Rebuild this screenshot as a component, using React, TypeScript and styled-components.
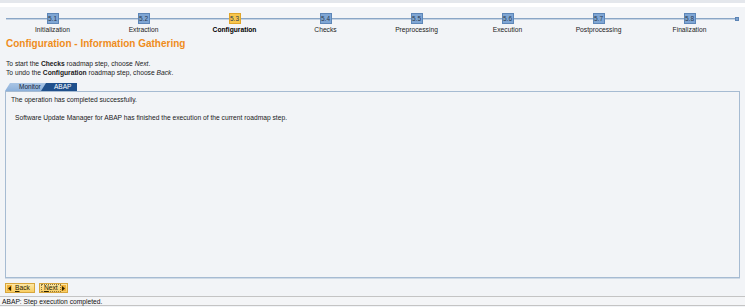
import React from "react";
import styled, { createGlobalStyle, css } from "styled-components";

const GlobalStyle = createGlobalStyle`
  html, body {
    margin: 0;
    padding: 0;
    background: #f2f4f7;
    font-family: "Liberation Sans", Arial, sans-serif;
    color: #1a1a1a;
  }
  #root {
    height: 307px;
  }
`;

interface Step {
  num: string;
  label: string;
  active?: boolean;
}

const steps: Step[] = [
  { num: "5.1", label: "Initialization" },
  { num: "5.2", label: "Extraction" },
  { num: "5.3", label: "Configuration", active: true },
  { num: "5.4", label: "Checks" },
  { num: "5.5", label: "Preprocessing" },
  { num: "5.6", label: "Execution" },
  { num: "5.7", label: "Postprocessing" },
  { num: "5.8", label: "Finalization" },
];

const App: React.FC = () => {
  return (
    <>
      <GlobalStyle />
      <Page>
        <TopBand />
        <Roadmap>
          {steps.map((s) => (
            <StepItem key={s.num}>
              <StepBox $active={s.active}>{s.num}</StepBox>
              <StepLabel $active={s.active}>{s.label}</StepLabel>
            </StepItem>
          ))}
        </Roadmap>

        <Title>Configuration - Information Gathering</Title>

        <Instructions>
          <div>
            To start the <b>Checks</b> roadmap step, choose <i>Next</i>.
          </div>
          <div>
            To undo the <b>Configuration</b> roadmap step, choose <i>Back</i>.
          </div>
        </Instructions>

        <TabStrip>
          <Tab>Monitor</Tab>
          <Tab $selected>ABAP</Tab>
        </TabStrip>
        <Panel>
          <PanelLine>The operation has completed successfully.</PanelLine>
          <PanelLine $indent>
            Software Update Manager for ABAP has finished the execution of the current roadmap step.
          </PanelLine>
        </Panel>

        <ButtonRow>
          <NavButton>
            <ArrowBox>
              <svg width="3" height="5" viewBox="0 0 3 5">
                <path d="M3 0 L0 2.5 L3 5 Z" fill="#2e2400" />
              </svg>
            </ArrowBox>
            <ButtonText>
              <u>B</u>ack
            </ButtonText>
          </NavButton>
          <NavButton>
            <ButtonText $focused>
              <u>N</u>ext
            </ButtonText>
            <ArrowBox>
              <svg width="3" height="5" viewBox="0 0 3 5">
                <path d="M0 0 L3 2.5 L0 5 Z" fill="#2e2400" />
              </svg>
            </ArrowBox>
          </NavButton>
        </ButtonRow>

        <StatusBar>ABAP: Step execution completed.</StatusBar>
      </Page>
    </>
  );
};

export default App;

const smallText = css`
  font-size: 6.7px;
  line-height: 8px;
`;

const Page = styled.div`
  display: flex;
  flex-direction: column;
  height: 307px;
  overflow: hidden;
`;

const TopBand = styled.div`
  height: 3px;
  background: #e4e7ec;
  border-bottom: 4px solid #ffffff;
`;

const Roadmap = styled.div`
  position: relative;
  display: grid;
  grid-template-columns: repeat(8, 91px);
  padding: 6px 0 0 7px;
  height: 24px;

  &::before {
    content: "";
    position: absolute;
    left: 6px;
    width: 731px;
    top: 11px;
    height: 1px;
    background: #8aa6c6;
    border-bottom: 1px solid #c5d3e3;
  }
  &::after {
    content: "";
    position: absolute;
    left: 735px;
    top: 10px;
    width: 4px;
    height: 4px;
    background: #7fa3cf;
    border: 1px solid #5c84b5;
    box-sizing: border-box;
  }
`;

const StepItem = styled.div`
  position: relative;
  display: flex;
  flex-direction: column;
  align-items: center;
  z-index: 1;
`;

const StepBox = styled.div<{ $active?: boolean }>`
  width: 12px;
  height: 11px;
  box-sizing: border-box;
  display: flex;
  align-items: center;
  justify-content: center;
  font-size: 6.5px;
  color: #2b3a4e;
  background: ${(p) => (p.$active ? "#f7c64e" : "#7fa6d4")};
  border: 1px solid ${(p) => (p.$active ? "#e0a52a" : "#5d86b8")};
`;

const StepLabel = styled.div<{ $active?: boolean }>`
  ${smallText};
  margin-top: 2px;
  white-space: nowrap;
  font-weight: ${(p) => (p.$active ? 700 : 400)};
  color: ${(p) => (p.$active ? "#000" : "#222")};
`;

const Title = styled.div`
  margin: 1px 0 0 6px;
  font-size: 10px;
  line-height: 12px;
  font-weight: 700;
  color: #ef8d1c;
`;

const Instructions = styled.div`
  font-size: 6.7px;
  line-height: 9px;
  margin: 9px 0 0 6px;
  color: #1a1a1a;
`;

const TabStrip = styled.div`
  display: flex;
  margin: 6px 0 0 5px;
  height: 8px;
`;

const Tab = styled.div<{ $selected?: boolean }>`
  height: 8px;
  box-sizing: border-box;
  display: flex;
  align-items: center;
  font-size: 6.5px;
  line-height: 8px;
  white-space: nowrap;
  clip-path: polygon(0 100%, 5px 0, 100% 0, 100% 100%);
  ${(p) =>
    p.$selected
      ? css`
          margin-left: -5px;
          width: 36px;
          padding-left: 13px;
          background: #20508c;
          color: #fff;
        `
      : css`
          width: 41px;
          padding-left: 14px;
          background: linear-gradient(#a9c4e4, #8cb0da);
          color: #13243a;
        `}
`;

const Panel = styled.div`
  box-sizing: border-box;
  margin-left: 5px;
  width: 735px;
  height: 187px;
  border: 1px solid #a6bbd2;
  box-shadow: 0 1px 0 #cfdae6;
  padding: 4px 0 0 5px;
`;

const PanelLine = styled.div<{ $indent?: boolean }>`
  ${smallText};
  color: #1a1a1a;
  padding-left: ${(p) => (p.$indent ? "4px" : "0")};
  margin-bottom: 10px;
`;

const ButtonRow = styled.div`
  display: flex;
  gap: 4px;
  margin: 5px 0 0 5px;
  height: 10px;
`;

const NavButton = styled.div`
  display: flex;
  align-items: center;
  height: 10px;
  box-sizing: border-box;
  padding: 0 1px;
  background: linear-gradient(#fde7a6, #f8cd62);
  border: 1px solid #d7a53c;
`;

const ArrowBox = styled.div`
  width: 5px;
  height: 6px;
  display: flex;
  align-items: center;
  justify-content: center;
  background: #f2b23a;
`;

const ButtonText = styled.span<{ $focused?: boolean }>`
  ${smallText};
  height: 8px;
  box-sizing: border-box;
  color: #2a2200;
  padding: 0 2px;
  border: 1px dotted ${(p) => (p.$focused ? "#8a7640" : "transparent")};
  line-height: 6px;
  u {
    text-decoration: underline;
  }
`;

const StatusBar = styled.div`
  ${smallText};
  margin-top: 3px;
  height: 10px;
  box-sizing: border-box;
  border-top: 1px solid #c4c4c4;
  border-bottom: 1px solid #c4c4c4;
  padding: 1px 0 0 2px;
  background: #f4f5f7;
  color: #111;
`;
